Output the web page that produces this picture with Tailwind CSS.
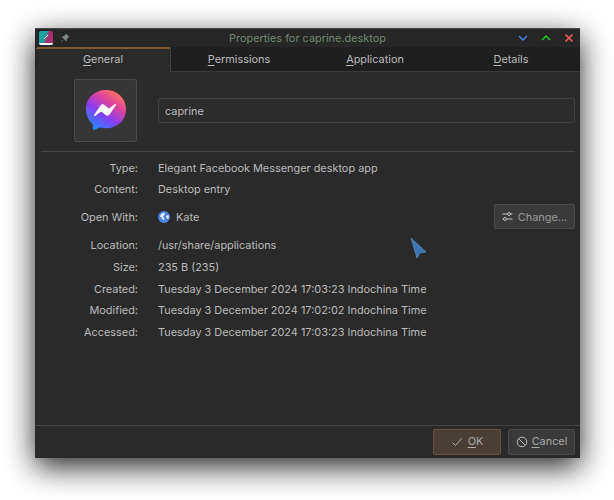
<!DOCTYPE html>
<html lang="en">
<head>
<meta charset="UTF-8">
<title>Properties for caprine.desktop</title>
<script src="https://cdn.jsdelivr.net/npm/@tailwindcss/browser@4"></script>
</head>
<body class="bg-white">
<div class="w-[614px] h-[500px] pl-[35px] pt-[28px] overflow-hidden font-['Inter',sans-serif] text-[10.9px] text-[#bababa]">
  <div class="relative w-[545px] h-[430px] bg-[#2a2a2a] flex flex-col shadow-[0_9px_28px_rgba(0,0,0,0.85)]">
    <!-- titlebar -->
    <div class="h-[19px] flex items-center bg-[#262626] border-t border-[#4a4a4a]">
      <div class="w-[66px] flex items-center">
        <div class="ml-[4px] w-[14px] h-[14px] rounded-[2px] bg-[linear-gradient(110deg,#1fa0a0_45%,#a8306f_60%)] border-b-2 border-white flex items-center justify-center">
          <svg width="6" height="6" viewBox="0 0 6 6"><path d="M1 5L5 1" stroke="#fff" stroke-width="1" fill="none"/></svg>
        </div>
        <svg class="ml-[7px]" width="10" height="10" viewBox="0 0 10 10"><path d="M6 1l3 3-1 .5-1.500 1.500-.3 2L3.800 5.600 2 3.800l2-.3L5.500 2z M3 7L1 9" fill="#7d8a80" stroke="#7d8a80" stroke-width=".6"/></svg>
      </div>
      <div class="flex-1 text-center text-[#6f8a6f]">Properties for caprine.desktop</div>
      <div class="w-[66px] flex items-center justify-end gap-[13px] pr-[6px]">
        <svg width="10" height="10" viewBox="0 0 10 10"><path d="M1 3l4 4 4-4" stroke="#4a86e8" stroke-width="1.400" fill="none"/></svg>
        <svg width="10" height="10" viewBox="0 0 10 10"><path d="M1 7l4-4 4 4" stroke="#22d32a" stroke-width="1.400" fill="none"/></svg>
        <svg width="10" height="10" viewBox="0 0 10 10"><path d="M1.500 1.500l7 7M8.500 1.500l-7 7" stroke="#f25c5c" stroke-width="1.600" fill="none"/></svg>
      </div>
    </div>
    <!-- tabs -->
    <div class="h-[25px] flex bg-[#1f1f1f] pl-[1px] pr-[1px] border-b border-[#3a3a3a]">
      <div class="w-[135px] -mb-px bg-[#2a2a2a] border-t-2 border-[#7c5a32] border-r border-r-[#3f3f3f] rounded-t-[2px] flex items-center justify-center pb-[2px]"><span><span class="underline underline-offset-2">G</span>eneral</span></div>
      <div class="w-[136px] flex items-center justify-center"><span><span class="underline underline-offset-2">P</span>ermissions</span></div>
      <div class="w-[136px] flex items-center justify-center"><span><span class="underline underline-offset-2">A</span>pplication</span></div>
      <div class="w-[136px] flex items-center justify-center"><span><span class="underline underline-offset-2">D</span>etails</span></div>
    </div>
    <!-- icon + name -->
    <div class="h-[79px] flex items-center pl-[39px] pr-[5px] pb-[3px]">
      <div class="w-[63px] h-[63px] shrink-0 bg-[#363636] border border-[#4b4b4b] rounded-[2px] flex items-center justify-center">
        <svg width="42" height="42" viewBox="0 0 42 42">
          <defs><linearGradient id="m" x1="0.200" y1="1" x2="0.850" y2="0.050"><stop offset="0" stop-color="#1b8cff"/><stop offset="0.400" stop-color="#8b3cf0"/><stop offset="0.700" stop-color="#e0449c"/><stop offset="1" stop-color="#ff7a5c"/></linearGradient></defs>
          <path d="M21 1C9.700 1 1 9.200 1 20.300c0 5.800 2.400 10.800 6.300 14.300.7.600.6 1 .7 5.100.1 1 1 1.500 1.900 1.100l4.500-2c1 -.4 1.800 -.1 2.400 0 1.300.3 2.800.5 4.200.5 11.300 0 20-8.200 20-19S32.300 1 21 1z" fill="url(#m)"/>
          <path d="M9 26l6.500-9.600c.8-1.200 2.400-1.500 3.500-.7l5 3.700 6-4.300c.6-.5 1.400.2 1 .9l-6.400 9.600c-.8 1.200-2.400 1.500-3.500.7l-5-3.700-6.100 4.300c-.6.500-1.400-.2-1-.9z" fill="#fff"/>
        </svg>
      </div>
      <div class="ml-[21px] flex-1 h-[25px] border border-[#414141] rounded-[2px] bg-[#2c2c2c] flex items-center pl-[6px] pt-[2px]">caprine</div>
    </div>
    <div class="ml-[6px] mr-[5px] h-px bg-[#444444]"></div>
    <!-- details -->
    <div class="grid grid-cols-[103px_1fr] grid-rows-[21.5px_21.5px_34.5px_21.5px_22px_21.5px_21.5px_21.5px] gap-x-[20px] pt-[5px] pr-[5px] items-center">
      <div class="text-right">Type:</div><div>Elegant Facebook Messenger desktop app</div>
      <div class="text-right">Content:</div><div>Desktop entry</div>
      <div class="text-right">Open With:</div>
      <div class="flex items-center justify-between">
        <span class="flex items-center gap-[6px]">
          <svg width="12" height="12" viewBox="0 0 12 12"><circle cx="6" cy="6" r="6" fill="#4a82e0"/><path d="M3 3l3-1.500 1 2-2 2 1.500 2-1.500 2-1-2.500-2-1.500zM8 5l2.500-1 .5 3-2 1z" fill="#e3ecf9"/></svg>
          Kate
        </span>
        <span class="h-[25px] w-[81px] -mt-px bg-[#3a3a3a] border border-[#4a4a4a] rounded-[2px] flex items-center justify-center gap-[5px] text-[#9a9a9a]">
          <svg width="11" height="11" viewBox="0 0 11 11" fill="none" stroke="#c0c0c0"><path d="M.5 3h10M.5 8h10" stroke-width="1"/><circle cx="7" cy="3" r="1.500" fill="#3a3a3a"/><circle cx="3" cy="8" r="1.500" fill="#3a3a3a"/></svg>
          Change...
        </span>
      </div>
      <div class="text-right">Location:</div><div>/usr/share/applications</div>
      <div class="text-right">Size:</div><div>235 B (235)</div>
      <div class="text-right">Created:</div><div>Tuesday 3 December 2024 17:03:23 Indochina Time</div>
      <div class="text-right">Modified:</div><div>Tuesday 3 December 2024 17:02:02 Indochina Time</div>
      <div class="text-right">Accessed:</div><div>Tuesday 3 December 2024 17:03:23 Indochina Time</div>
    </div>
    <!-- footer -->
    <div class="mt-auto h-[33px] border-t border-[#444444] flex items-center justify-end gap-[7px] pr-[5px] pb-[1px]">
      <span class="w-[68px] h-[26px] bg-[#4a3f36] border border-[#6a5238] rounded-[2px] flex items-center justify-center gap-[5px] text-[#a8a8a8]">
        <svg width="12" height="12" viewBox="0 0 12 12"><path d="M1.500 6.500l3 3 6-7" stroke="#b0b0b0" stroke-width="1" fill="none"/></svg>
        <span><span class="underline underline-offset-2">O</span>K</span>
      </span>
      <span class="w-[67px] h-[26px] bg-[#3a3a3a] border border-[#4a4a4a] rounded-[2px] flex items-center justify-center gap-[4px] text-[#a8a8a8]">
        <svg width="12" height="12" viewBox="0 0 12 12" fill="none" stroke="#b8b8b8"><circle cx="6" cy="6" r="4.800"/><path d="M2.700 2.700l6.600 6.600"/></svg>
        <span><span class="underline underline-offset-2">C</span>ancel</span>
      </span>
    </div>
    <!-- mouse pointer -->
    <svg class="absolute left-[374px] top-[208px]" width="20" height="24" viewBox="0 0 20 24"><path d="M2 2l15 14-6 1-3 5z" fill="#3f74b4" stroke="#5f8cc0" stroke-width=".7"/></svg>
  </div>
</div>
</body>
</html>
